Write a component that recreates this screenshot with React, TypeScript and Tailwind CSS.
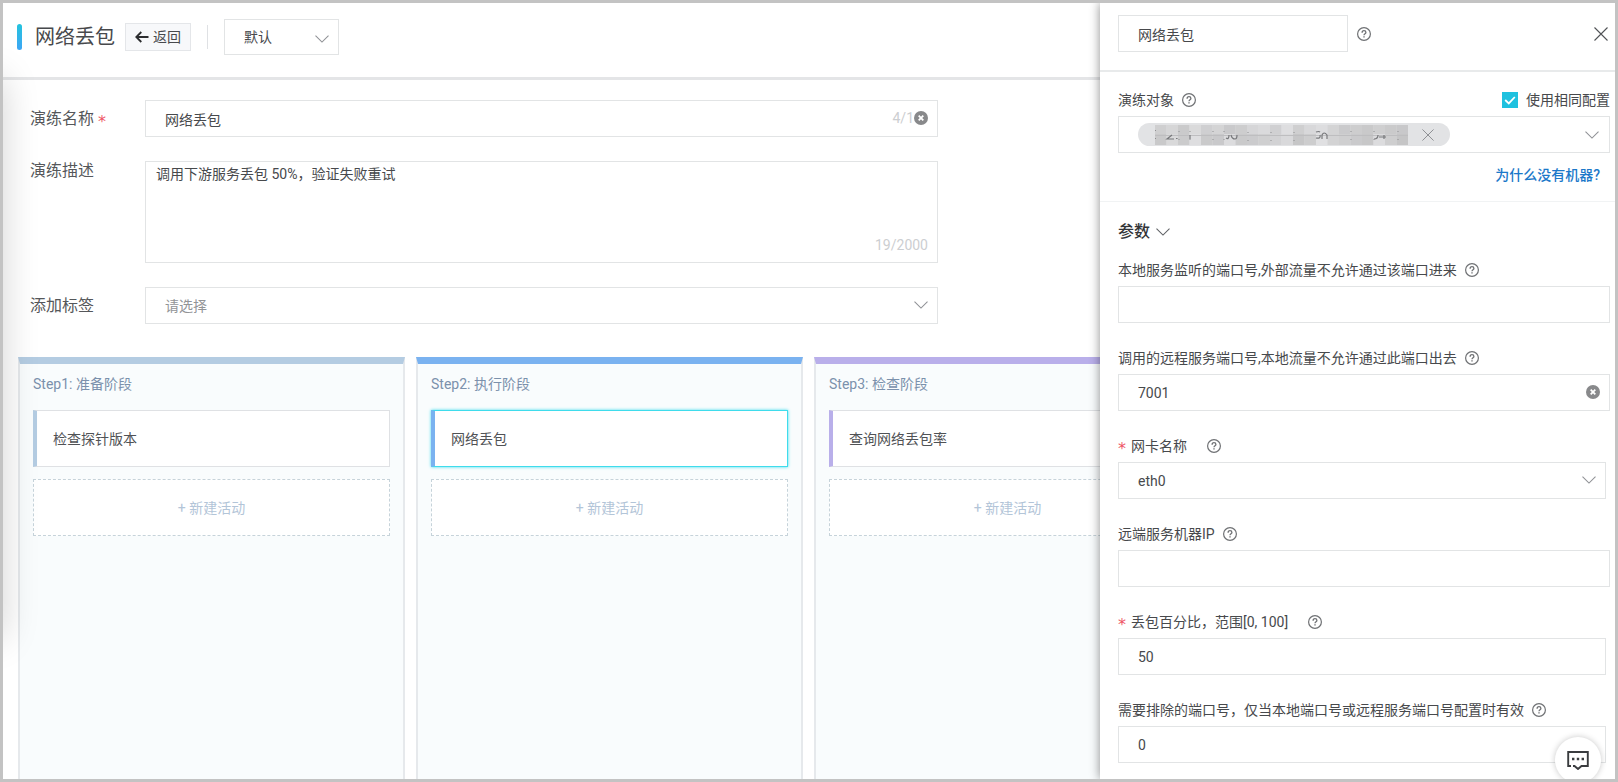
import React, { useState } from 'react';

// Thin chevron shared by every drop-down
const Chevron = ({ className = '' }: { className?: string }) => (
  <svg viewBox="0 0 14 8" className={`h-2 w-3.5 ${className}`} fill="none" stroke="currentColor" strokeWidth="1.1" aria-hidden="true">
    <path d="M0.5 0.7 L7 7.1 L13.5 0.7" />
  </svg>
);

const Cross = ({ className = '' }: { className?: string }) => (
  <svg viewBox="0 0 14 14" className={className} fill="none" stroke="currentColor" strokeWidth="1.1" aria-hidden="true">
    <path d="M0.5 0.5 L13.5 13.5 M13.5 0.5 L0.5 13.5" />
  </svg>
);

const Help = () => (
  <button type="button" aria-label="帮助" className="block shrink-0 text-[#6f7174]">
    <svg viewBox="0 0 14 14" className="block h-3.5 w-3.5" fill="none" stroke="currentColor" aria-hidden="true">
      <circle cx="7" cy="7" r="6.4" strokeWidth="1.2" />
      <path d="M5.1 5.7 C5.1 4.4 5.9 3.7 7 3.7 C8.1 3.7 8.9 4.4 8.9 5.4 C8.9 6.7 7 6.7 7 8.3" strokeWidth="1.3" />
      <path d="M7 9.3 V10.6" strokeWidth="1.4" />
    </svg>
  </button>
);

const Clear = ({ onClick }: { onClick: () => void }) => (
  <button type="button" aria-label="清除" onClick={onClick} className="block shrink-0">
    <svg viewBox="0 0 14 14" className="block h-3.5 w-3.5" aria-hidden="true">
      <circle cx="7" cy="7" r="7" fill="#88898b" />
      <path d="M4.7 4.7 L9.3 9.3 M9.3 4.7 L4.7 9.3" stroke="#fff" strokeWidth="1.8" />
    </svg>
  </button>
);

const Required = () => (
  <span className="pt-1.5 font-['DejaVu_Sans',sans-serif] text-base leading-none text-[#ee5566]">*</span>
);

const steps = [
  { title: 'Step1: 准备阶段', activity: '检查探针版本', bar: 'border-t-[#b4cce2]', side: 'border-l-[#b4cce2]', active: false },
  { title: 'Step2: 执行阶段', activity: '网络丢包', bar: 'border-t-[#7ab2f0]', side: 'border-l-[#7ab2f0]', active: true },
  { title: 'Step3: 检查阶段', activity: '查询网络丢包率', bar: 'border-t-[#b9afea]', side: 'border-l-[#b9afea]', active: false }
];

interface Param {
  id: string;
  label: string;
  value: string;
  required?: boolean;
  clearable?: boolean;
  select?: boolean;
  narrow?: boolean;
}

const params: Param[] = [
  { id: 'localPort', label: '本地服务监听的端口号,外部流量不允许通过该端口进来', value: '' },
  { id: 'remotePort', label: '调用的远程服务端口号,本地流量不允许通过此端口出去', value: '7001', clearable: true },
  { id: 'nic', label: '网卡名称', value: 'eth0', required: true, select: true, narrow: true },
  { id: 'remoteIp', label: '远端服务机器IP', value: '' },
  { id: 'percent', label: '丢包百分比，范围[0, 100]', value: '50', required: true, narrow: true },
  { id: 'exclude', label: '需要排除的端口号，仅当本地端口号或远程服务端口号配置时有效', value: '0', narrow: true }
];

// Grey levels of the masked machine name, one tile per entry
const maskTop = ['#cfcfd0', '#d6d6d7', '#cacacb', '#dadadb', '#cfcfd1', '#d4d4d5', '#c9c9cb', '#cdcdce', '#d6d6d8', '#dadadc', '#d0d0d2', '#dedee0', '#cfcfd0', '#d8d8da', '#dddddf', '#d4d4d5', '#cacacc', '#cdcdce', '#c9c9ca', '#cfcfd0', '#cacacb', '#c8c8ca'];
const maskBottom = ['#c9c9ca', '#d9d9da', '#cbcbcc', '#dedee0', '#cacacb', '#c9c9cb', '#dcdcde', '#cacacb', '#cbcbcd', '#cfcfd0', '#d2d2d4', '#d9d9db', '#c6c6c7', '#cdcdce', '#e0e0e2', '#d3d3d4', '#cfcfd0', '#cacacc', '#c7c7c8', '#dcdcde', '#cececf', '#c5c5c6'];

const MaskedName = () => (
  <svg viewBox="0 0 253 20" className="h-5 w-[253px]" role="img" aria-label="机器">
    {maskTop.map((fill, i) => (
      <rect key={i} x={i * 11.5} y="0" width="11.6" height="9" fill={fill} />
    ))}
    {maskBottom.map((fill, i) => (
      <rect key={i} x={i * 11.5} y="9" width="11.6" height="11" fill={fill} />
    ))}
    <path d="M0 10.5 H253" stroke="#bebec0" strokeWidth="1" />
    <g fill="none" stroke="#77787b" strokeWidth="1.2">
      <path d="M17 10 L12 14 H19 M21 13.5 h1.6 M35 10 V14" />
      <path d="M71 13 q3 2 3 -3 M76 10 q1 4 4 4 q2 0 2 -4" />
      <path d="M161 7 q3 -1 4 0 M161 13 q5 1 4 -3 M167 14 V10 q2 -4 5 0 V14" />
      <path d="M219 14 q4 0 4 -4 M224 12 H231 M229 10 V14" />
    </g>
    <g stroke="#8f9092" strokeWidth="1" strokeDasharray="1 7">
      <path d="M0.5 5 V20 M24 6 V20 M35 6 V20 M58 6 V20 M69 6 V20 M93 7 V20 M116 7 V20 M139 7 V20 M196 6 V20 M219 6 V20 M243 6 V20" />
    </g>
  </svg>
);

function ParamField({ param }: { param: Param }) {
  const [value, setValue] = useState(param.value);
  const box = 'h-[37px] w-full appearance-none rounded-none border border-[#e2e4e5] bg-white pl-[19px] pr-10 text-sm text-[#47494c] outline-none';

  return (
    <div className={param.narrow ? 'pr-1' : ''}>
      <div className="flex h-8 items-center">
        {param.required && <span className="flex w-[13px]"><Required /></span>}
        <label htmlFor={param.id} className="whitespace-nowrap">{param.label}</label>
        <span className={param.required ? 'ml-5' : 'ml-2'}><Help /></span>
      </div>
      <div className="relative">
        {param.select ? (
          <select id={param.id} value={value} onChange={(e) => setValue(e.target.value)} className={box}>
            <option>{param.value}</option>
          </select>
        ) : (
          <input id={param.id} type="text" value={value} onChange={(e) => setValue(e.target.value)} className={box} />
        )}
        {param.select && <Chevron className="pointer-events-none absolute right-2.5 top-3.5 text-[#909296]" />}
        {param.clearable && (
          <span className="absolute right-2.5 top-[11px]"><Clear onClick={() => setValue('')} /></span>
        )}
      </div>
    </div>
  );
}

export default function App() {
  const [name, setName] = useState('网络丢包');
  const [desc, setDesc] = useState('调用下游服务丢包 50%，验证失败重试');
  const [nodeName, setNodeName] = useState('网络丢包');
  const [sameConfig, setSameConfig] = useState(true);

  return (
    <div className="relative flex h-screen overflow-hidden border-[3px] border-[#c3c3c3] bg-white font-['Roboto','Noto_Sans_CJK_SC',sans-serif] text-sm text-[#47494c]">
      {/* Shade cast by the collapsed side menu */}
      <div className="pointer-events-none absolute -left-10 top-[75px] h-[560px] w-10 shadow-[0_0_36px_rgba(0,0,0,0.18)]" />

      <main className="flex min-w-0 flex-1 flex-col overflow-hidden">
        <header className="flex h-[77px] shrink-0 items-start border-b-[3px] border-[#e4e5e7] pl-3.5 pt-4">
          <div className="flex h-9 items-center">
            <span className="h-[26px] w-[5px] rounded-sm bg-linear-to-b from-[#22c3dd] to-[#3da5f5]" />
            <h1 className="ml-[13px] text-xl leading-8">网络丢包</h1>
            <button type="button" className="ml-2.5 flex h-7 w-[66px] items-center justify-center gap-1 border border-[#e4e6e9] bg-[#f7f8fa]">
              <svg viewBox="0 0 14 12" className="h-3 w-3.5" fill="none" stroke="#2c2d2f" strokeWidth="1.8" aria-hidden="true">
                <path d="M13.5 6 H1.5 M6.3 1 L1.3 6 L6.3 11" />
              </svg>
              返回
            </button>
            <span className="ml-4 h-6 w-px bg-[#dfe1e4]" />
            <div className="relative ml-4">
              <select aria-label="环境" className="h-9 w-[115px] appearance-none rounded-none border border-[#e2e4e5] bg-white pl-[19px] outline-none">
                <option>默认</option>
              </select>
              <Chevron className="pointer-events-none absolute right-2.5 top-4 text-[#909296]" />
            </div>
          </div>
        </header>

        <form className="flex shrink-0 flex-col gap-6 pl-[27px] pt-5">
          <div className="flex">
            <label htmlFor="name" className="flex w-[115px] shrink-0 items-center gap-1 text-base leading-[37px] text-[#55575a]">
              演练名称 <Required />
            </label>
            <div className="relative w-[793px]">
              <input id="name" type="text" value={name} onChange={(e) => setName(e.target.value)} className="h-[37px] w-full border border-[#e2e4e5] bg-white pl-[19px] pr-14 outline-none" />
              <div className="absolute right-2.5 top-0 flex h-9 items-center">
                <span className="text-[#ccced1]">4/1</span>
                <Clear onClick={() => setName('')} />
              </div>
            </div>
          </div>

          <div className="flex">
            <label htmlFor="desc" className="w-[115px] shrink-0 text-base leading-5 text-[#55575a]">演练描述</label>
            <div className="relative w-[793px]">
              <textarea id="desc" value={desc} onChange={(e) => setDesc(e.target.value)} className="block h-[102px] w-full resize-none border border-[#e2e4e5] bg-white px-2.5 py-0.5 leading-5 outline-none" />
              <span className="absolute bottom-2 right-2.5 leading-5 text-[#ccced1]">19/2000</span>
            </div>
          </div>

          <div className="flex">
            <label htmlFor="tags" className="w-[115px] shrink-0 text-base leading-[37px] text-[#55575a]">添加标签</label>
            <div className="relative w-[793px]">
              <select id="tags" className="h-[37px] w-full appearance-none rounded-none border border-[#e2e4e5] bg-white pl-[19px] text-[#929497] outline-none">
                <option>请选择</option>
              </select>
              <Chevron className="pointer-events-none absolute right-2.5 top-3.5 text-[#909296]" />
            </div>
          </div>
        </form>

        <div className="mt-[33px] flex min-h-0 flex-1 gap-[11px] pl-[15px]">
          {steps.map((step) => (
            <section key={step.title} className={`w-[387px] shrink-0 border-x-2 border-t-[7px] border-x-[#e6e9ec] bg-[#f9fcfd] px-[13px] ${step.bar}`}>
              <h2 className="pb-4 pt-2.5 leading-5 text-[#7b91ac]">{step.title}</h2>
              <div
                className={`flex h-[57px] items-center border border-l-4 bg-white pl-4 text-[#505255] ${
                  step.active ? 'border-y-[#3fdcec] border-r-[#3fdcec] shadow-[0_0_3px_#3fdcec]' : 'border-y-[#dfe1e4] border-r-[#dfe1e4]'
                } ${step.side}`}
              >
                {step.activity}
              </div>
              <button type="button" className="mt-3 h-[57px] w-full border border-dashed border-[#c6d3da] bg-white text-[#b3c5d8]">
                + 新建活动
              </button>
            </section>
          ))}
        </div>
      </main>

      <aside className="relative flex w-[515px] shrink-0 flex-col bg-white shadow-[0_0_10px_rgba(0,0,0,0.45)]">
        <div className="flex h-[69px] shrink-0 items-start border-b-2 border-[#e8eaeb] pl-[18px] pr-[7px] pt-3">
          <div className="flex h-[37px] flex-1 items-center">
            <input type="text" aria-label="活动名称" value={nodeName} onChange={(e) => setNodeName(e.target.value)} className="mr-[9px] h-[37px] w-[230px] border border-[#e2e4e5] bg-white pl-[19px] outline-none" />
            <Help />
            <button type="button" aria-label="关闭" className="ml-auto text-[#505256]">
              <Cross className="block h-3.5 w-3.5" />
            </button>
          </div>
        </div>

        <div className="shrink-0 border-b border-[#f1f3f4] pb-4 pl-[18px] pr-[5px] pt-3">
          <div className="flex h-8 items-center pb-1 pt-1">
            <span id="targets">演练对象</span>
            <span className="ml-2"><Help /></span>
            <label className="ml-auto flex items-center gap-2">
              <span className="relative block h-4 w-4">
                <input type="checkbox" checked={sameConfig} onChange={(e) => setSameConfig(e.target.checked)} className="peer block h-4 w-4 appearance-none border border-[#c6cacd] checked:border-[#1fc1df] checked:bg-[#1fc1df]" />
                <svg viewBox="0 0 16 16" className="pointer-events-none absolute inset-0 hidden peer-checked:block" fill="none" stroke="#fff" strokeWidth="1.8" aria-hidden="true">
                  <path d="M3.2 8 L6.8 11.4 L12.8 5" />
                </svg>
              </span>
              使用相同配置
            </label>
          </div>
          <div role="group" aria-labelledby="targets" className="flex h-[37px] items-center border border-[#e2e4e5] pl-[19px] pr-2.5">
            <span className="flex h-[23px] w-[312px] items-center rounded-full bg-[#e2e3e5] pl-[17px]">
              <MaskedName />
              <button type="button" aria-label="移除" className="ml-3.5 text-[#898b8f]">
                <Cross className="block h-3 w-3" />
              </button>
            </span>
            <button type="button" aria-label="展开" className="ml-auto text-[#909296]">
              <Chevron className="block" />
            </button>
          </div>
          <div className="flex justify-end pr-2.5 pt-3">
            <a href="#" className="font-medium leading-5 text-[#1b78c9]">为什么没有机器?</a>
          </div>
        </div>

        <div className="pl-[18px] pr-[5px]">
          <button type="button" className="mt-[18px] flex h-6 items-center gap-1.5 text-base font-medium text-[#333538]">
            参数
            <Chevron className="text-[#606266]" />
          </button>
          <div className="mt-2.5 flex flex-col gap-[19px]">
            {params.map((param) => (
              <ParamField key={param.id} param={param} />
            ))}
          </div>
        </div>

        {/* Floating feedback bubble */}
        <button type="button" aria-label="反馈" className="absolute -bottom-1 right-3.5 flex h-[46px] w-[46px] items-center justify-center rounded-full bg-white shadow-[0_0_6px_rgba(0,0,0,0.22)]">
          <svg viewBox="0 0 22 20" className="h-5 w-[22px]" fill="none" stroke="#3a3c3f" strokeWidth="1.9" aria-hidden="true">
            <path d="M4 16 H1.2 V2 H20.8 V16 H14.5 L11 19 L7.5 16 H6" />
            <path d="M5 9 h2.4 M9.8 9 h2.4 M14.6 9 h2.4" strokeWidth="2.4" />
          </svg>
        </button>
      </aside>
    </div>
  );
}
